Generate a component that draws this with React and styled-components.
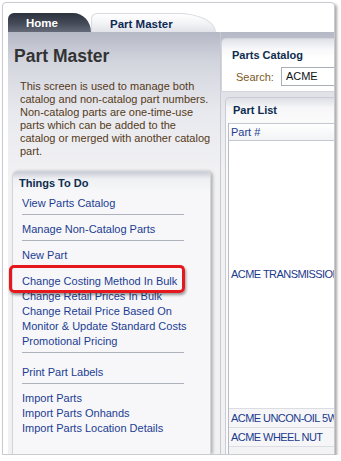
import React from "react";
import styled, { createGlobalStyle } from "styled-components";

const GlobalStyle = createGlobalStyle`
  html, body {
    margin: 0;
    background: #fff;
  }
  body {
    font-family: "Liberation Sans", Arial, sans-serif;
  }
`;

const Frame = styled.div`
  margin: 2px 0 0 2px;
  width: 331px;
  height: 451px;
  border: 1px solid #c9cbd0;
  border-radius: 4px 4px 0 0;
  box-shadow: 2px 2px 3px rgba(0, 0, 0, 0.35);
  overflow: hidden;
  display: flex;
  flex-direction: column;
  background: #fff;
`;

const TabBar = styled.div`
  display: flex;
  align-items: flex-end;
  height: 29px;
  padding: 10px 0 0 5px;
  box-sizing: border-box;
  flex-shrink: 0;
`;

const Tab = styled.div`
  position: relative;
  height: 19px;
  box-sizing: border-box;
  padding-left: 18px;
  line-height: 20px;
  font-size: 11.5px;
  font-weight: bold;
  white-space: nowrap;
  width: ${(p) => (p.$active ? "125px" : "83px")};
  color: ${(p) => (p.$active ? "#0d2a55" : "#fff")};
  background: ${(p) =>
    p.$active
      ? "linear-gradient(#ffffff, #f3f4f6 50%, #e2e3e9)"
      : "linear-gradient(#2c323e, #444a57 55%, #646a78)"};
  border: ${(p) => (p.$active ? "1px solid #d8dadf" : "none")};
  border-bottom: none;
  border-radius: ${(p) =>
    p.$active ? "6px 38px 0 0 / 6px 19px 0 0" : "6px 18px 0 0 / 6px 19px 0 0"};
  z-index: ${(p) => (p.$active ? 2 : 1)};
`;

const Body = styled.div`
  flex: 1;
  min-height: 0;
  display: flex;
  margin-left: 5px;
  background: linear-gradient(#b5b8c5 0, #d3d5de 30px, #e8e9ee 80px, #f1f1f4 140px);
`;

const LeftPanel = styled.div`
  width: 213px;
  flex-shrink: 0;
  display: flex;
  flex-direction: column;
  padding: 12px 0 0 6px;
  box-sizing: border-box;
  border-right: 1px solid #c8cad2;
`;

const PageTitle = styled.h1`
  margin: 0;
  font-size: 17.5px;
  line-height: 24px;
  color: #333;
  font-weight: bold;
`;

const Description = styled.p`
  margin: 11.5px 0 0 6px;
  font-size: 11px;
  line-height: 13px;
  color: #553a18;
  white-space: nowrap;
`;

const TodoBox = styled.div`
  flex: 1;
  margin: 13.5px 0 0 -2px;
  width: 199px;
  box-sizing: border-box;
  border: 1px solid #d3d5dc;
  border-bottom: none;
  border-radius: 5px 5px 0 0;
  padding: 3.5px 0 0 6px;
  background: linear-gradient(#c9ccd5 0, #eff0f3 7px, #f7f7f9 20px);
  box-shadow: 2px 0 3px rgba(0, 0, 0, 0.25);
`;

const BoxTitle = styled.div`
  font-size: 11px;
  font-weight: bold;
  line-height: 15px;
  color: #0d2d4e;
  white-space: nowrap;
`;

const LinkList = styled.div`
  margin-top: 5px;
  padding-left: 3px;
  display: flex;
  flex-direction: column;
`;

const TodoLink = styled.a`
  position: relative;
  display: block;
  font-size: 11px;
  line-height: 15px;
  color: #1c3d92;
  text-decoration: none;
  white-space: nowrap;
  margin-top: ${(p) => p.$gap || 0}px;
`;

const Separator = styled.div`
  width: 162px;
  height: 1px;
  background: #aeb2bd;
  margin: 3px 0 7px;
`;

const Highlight = styled.span`
  position: absolute;
  top: -9px;
  left: -13px;
  width: 176px;
  height: 28px;
  box-sizing: border-box;
  border: 3px solid #e4181d;
  border-radius: 5px;
  box-shadow: 1px 2px 3px rgba(0, 0, 0, 0.4);
  z-index: 3;
`;

const RightColumn = styled.div`
  flex: 1;
  min-width: 0;
  display: flex;
  flex-direction: column;
  padding-top: 6px;
  overflow: hidden;
`;

const CatalogBox = styled.div`
  border: 1px solid #d3d5dc;
  border-right: none;
  border-radius: 5px 0 0 0;
  padding: 8.5px 0 5px 10px;
  background: linear-gradient(#dfe1e7 0, #f8f8fa 10px, #fff 20px);
`;

const SearchRow = styled.div`
  display: flex;
  align-items: center;
  margin: 4.5px 0 0 4px;
  height: 19px;
  gap: 7px;
`;

const SearchLabel = styled.span`
  font-size: 11px;
  color: #7a5a1e;
`;

const SearchInput = styled.div`
  flex: 1;
  height: 19px;
  box-sizing: border-box;
  border: 1px solid #a9adb6;
  border-right: none;
  background: #fff;
  font-size: 11px;
  line-height: 17px;
  padding-left: 4px;
  color: #111;
`;

const PartListBox = styled.div`
  flex: 1;
  display: flex;
  flex-direction: column;
  margin: 5px 0 0 4px;
  border: 1px solid #c9ccd4;
  border-right: none;
  border-bottom: none;
  border-radius: 5px 0 0 0;
  padding-top: 4.5px;
  background: linear-gradient(#dcdee5 0, #f7f7f9 10px, #fafafb 20px);
`;

const ListTitle = styled(BoxTitle)`
  padding-left: 7px;
`;

const Table = styled.div`
  flex: 1;
  display: flex;
  flex-direction: column;
  margin: 5px 0 0 2px;
  border-left: 1px solid #b8bbc4;
  background: #fff;
`;

const HeaderCell = styled.div`
  height: 18px;
  box-sizing: border-box;
  border-top: 1px solid #c5c8d0;
  border-bottom: 1px solid #c5c8d0;
  background: linear-gradient(#ffffff, #f2f3f5);
  padding-left: 2px;
  font-size: 11px;
  line-height: 16px;
  color: #1c3d92;
`;

const Row = styled.div`
  display: flex;
  align-items: center;
  height: ${(p) => p.$h || 19}px;
  flex-shrink: 0;
  box-sizing: border-box;
  padding-left: 2px;
  border-bottom: 1px solid #dcdde2;
  background: ${(p) => (p.$tall ? "#fff" : "#f6f6f8")};
  font-size: 11px;
  letter-spacing: -0.55px;
  color: #1a3a8c;
  white-space: nowrap;
`;

const Filler = styled.div`
  flex: 1;
  background: #f3f3f5;
`;

function App() {
  return (
    <>
      <GlobalStyle />
      <Frame>
        <TabBar>
          <Tab>Home</Tab>
          <Tab $active>Part Master</Tab>
        </TabBar>
        <Body>
          <LeftPanel>
            <PageTitle>Part Master</PageTitle>
            <Description>
              This screen is used to manage both
              <br />
              catalog and non-catalog part numbers.
              <br />
              Non-catalog parts are one-time-use
              <br />
              parts which can be added to the
              <br />
              catalog or merged with another catalog
              <br />
              part.
            </Description>
            <TodoBox>
              <BoxTitle>Things To Do</BoxTitle>
              <LinkList>
                <TodoLink>View Parts Catalog</TodoLink>
                <Separator />
                <TodoLink>Manage Non-Catalog Parts</TodoLink>
                <Separator />
                <TodoLink>New Part</TodoLink>
                <Separator />
                <TodoLink>
                  Change Costing Method In Bulk
                  <Highlight />
                </TodoLink>
                <TodoLink>Change Retail Prices In Bulk</TodoLink>
                <TodoLink>Change Retail Price Based On</TodoLink>
                <TodoLink>Monitor &amp; Update Standard Costs</TodoLink>
                <TodoLink>Promotional Pricing</TodoLink>
                <Separator />
                <TodoLink $gap={5}>Print Part Labels</TodoLink>
                <Separator />
                <TodoLink>Import Parts</TodoLink>
                <TodoLink>Import Parts Onhands</TodoLink>
                <TodoLink>Import Parts Location Details</TodoLink>
              </LinkList>
            </TodoBox>
          </LeftPanel>
          <RightColumn>
            <CatalogBox>
              <BoxTitle>Parts Catalog</BoxTitle>
              <SearchRow>
                <SearchLabel>Search:</SearchLabel>
                <SearchInput>ACME</SearchInput>
              </SearchRow>
            </CatalogBox>
            <PartListBox>
              <ListTitle>Part List</ListTitle>
              <Table>
                <HeaderCell>Part #</HeaderCell>
                <Row $tall $h={268}>ACME TRANSMISSION FLUID</Row>
                <Row>ACME UNCON-OIL 5W-30</Row>
                <Row>ACME WHEEL NUT</Row>
                <Filler />
              </Table>
            </PartListBox>
          </RightColumn>
        </Body>
      </Frame>
    </>
  );
}

export default App;
